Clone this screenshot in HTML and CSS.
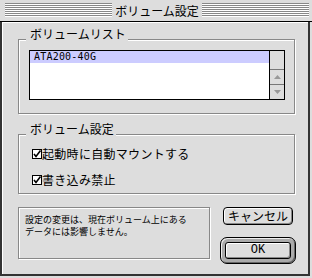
FILE: index.html
```html
<!DOCTYPE html>
<html lang="ja">
<head>
  <meta charset="UTF-8">
  <title>ボリューム設定</title>
  <link rel="stylesheet" href="styles.css">
</head>
<body>
  <div class="window">
    <div class="titlebar">
      <span class="stripes"></span>
      <span class="title">ボリューム設定</span>
      <span class="stripes"></span>
    </div>
    <div class="dialog">
      <div class="group list-group">
        <span class="group-title">ボリュームリスト</span>
        <div class="listbox">
          <ul class="list">
            <li class="selected">ATA200-40G</li>
          </ul>
          <div class="scrollbar">
            <div class="track"></div>
            <div class="arrow up"><svg width="7" height="4" viewBox="0 0 7 4"><polygon points="3.5,0 7,4 0,4" fill="#999"/></svg></div>
            <div class="arrow down"><svg width="7" height="4" viewBox="0 0 7 4"><polygon points="0,0 7,0 3.5,4" fill="#999"/></svg></div>
          </div>
        </div>
      </div>
      <div class="group options-group">
        <span class="group-title">ボリューム設定</span>
        <label class="check">
          <svg class="box" width="10" height="10" viewBox="0 0 10 10"><rect x="0.5" y="0.5" width="9" height="9" fill="#fff" stroke="#000"/><path d="M2 5 L4 7.5 L8.5 1.5" fill="none" stroke="#000" stroke-width="1.6"/></svg>起動時に自動マウントする
        </label>
        <label class="check">
          <svg class="box" width="10" height="10" viewBox="0 0 10 10"><rect x="0.5" y="0.5" width="9" height="9" fill="#fff" stroke="#000"/><path d="M2 5 L4 7.5 L8.5 1.5" fill="none" stroke="#000" stroke-width="1.6"/></svg>書き込み禁止
        </label>
      </div>
      <div class="footer">
        <div class="note">設定の変更は、現在ボリューム上にある<br>データには影響しません。</div>
        <div class="buttons">
          <button class="btn cancel">キャンセル</button>
          <div class="ring"><button class="btn ok">OK</button></div>
        </div>
      </div>
    </div>
  </div>
</body>
</html>
```

FILE: styles.css
```css
body { margin: 0; background: #ddd; font-family: "Noto Sans CJK JP", sans-serif; color: #000; }
.window { width: 312px; height: 278px; background: #ddd; overflow: hidden; }
.titlebar { height: 21px; border-bottom: 1px solid #000; display: flex; align-items: flex-start; padding: 0 3px 0 5px; }
.stripes { flex: 1; height: 14px; margin-top: 3px; background: repeating-linear-gradient(to bottom, #888 0 1px, #fff 1px 2px); }
.title { padding: 0 3px; font-size: 12px; line-height: 21px; white-space: nowrap; }
.dialog { box-sizing: border-box; width: 310px; height: 254px; border: 2px solid #333; border-top: 0; box-shadow: inset 1px 1px 0 #fff; padding: 17px 13px 0 16px; }
.group { position: relative; box-sizing: border-box; border: 1px solid #888; box-shadow: 1px 1px 0 #fff, inset 1px 1px 0 #fff; }
.group-title { position: absolute; top: -12px; left: 7px; padding: 0 2px 1px 4px; background: #ddd; font-size: 12px; line-height: 12px; white-space: nowrap; }
.list-group { height: 75px; padding: 10px 0 0 10px; }
.listbox { display: flex; box-sizing: border-box; width: 256px; height: 50px; border: 1px solid #000; background: #fff; }
.list { flex: 1; margin: 0; padding: 0; list-style: none; }
.list li { height: 12px; padding-left: 4px; font-family: "DejaVu Sans Mono", monospace; font-size: 10px; letter-spacing: 0.2px; line-height: 12px; }
.list li.selected { background: #ccf; }
.scrollbar { width: 14px; border-left: 1px solid #000; background: #ddd; display: flex; flex-direction: column; }
.track { height: 18px; border-bottom: 1px solid #777; }
.arrow { height: 14px; display: flex; align-items: center; justify-content: center; }
.arrow svg { display: block; }
.arrow.up { border-bottom: 1px solid #777; }
.options-group { margin-top: 20px; height: 60px; padding: 11px 0 0 13px; display: flex; flex-direction: column; gap: 10px; }
.check { display: flex; align-items: center; height: 16px; font-size: 12px; line-height: 16px; letter-spacing: 0.3px; white-space: nowrap; }
.box { display: block; flex-shrink: 0; margin-right: 0; }
.footer { display: flex; gap: 10px; margin-top: 13px; }
.note { flex-shrink: 0; box-sizing: border-box; width: 192px; height: 52px; border: 1px solid #888; box-shadow: 1px 1px 0 #fff, inset 1px 1px 0 #fff; padding: 6px 0 0 6px; font-size: 9px; line-height: 12px; white-space: nowrap; }
.buttons { flex-shrink: 0; width: 76px; display: flex; flex-direction: column; align-items: center; gap: 12px; }
.btn { box-sizing: border-box; padding: 0; border: 1px solid #000; background: #ddd; color: #000; box-shadow: inset 1px 1px 0 #fff, inset -1px -1px 0 #888; }
.cancel { width: 70px; height: 18px; border-radius: 4px; font-family: "Noto Sans CJK JP", sans-serif; font-size: 12px; line-height: 16px; }
.ring { box-sizing: border-box; width: 76px; height: 27px; padding: 4px; border: 1px solid #000; border-radius: 7px; background: #aaa; box-shadow: inset 1px 1px 0 #eee, inset -1px -1px 0 #666; }
.ok { display: block; width: 66px; height: 17px; border-radius: 3px; font-family: "Liberation Mono", monospace; font-size: 12px; line-height: 15px; }
```
